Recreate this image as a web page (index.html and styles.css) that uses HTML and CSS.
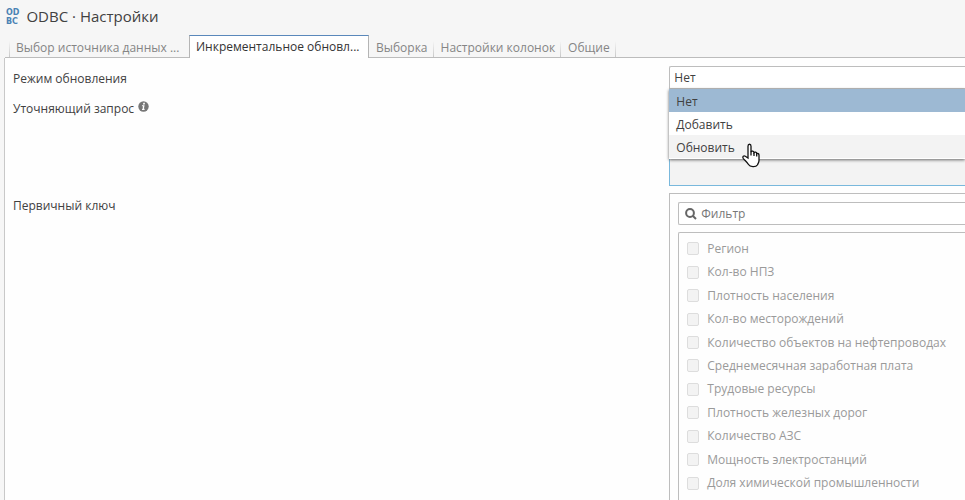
FILE: index.html
```html
<!DOCTYPE html>
<html lang="ru">
<head>
<meta charset="utf-8">
<title>ODBC · Настройки</title>
<link rel="stylesheet" href="styles.css">
</head>
<body>
<header class="header">
  <span class="logo" aria-hidden="true"><span>OD</span><span>BC</span></span>
  <h1 class="title">ODBC · Настройки</h1>
</header>
<nav class="tabs" role="tablist">
  <button class="tab tab-long tab-first" role="tab" type="button">Выбор источника данных ...</button>
  <button class="tab tab-long tab-active" role="tab" type="button" aria-selected="true">Инкрементальное обновл...</button>
  <button class="tab" role="tab" type="button">Выборка</button>
  <button class="tab" role="tab" type="button">Настройки колонок</button>
  <button class="tab" role="tab" type="button">Общие</button>
</nav>
<main class="panel">
  <label class="label" for="mode">Режим обновления</label>
  <div class="mode">
    <select class="select" id="mode"><option>Нет</option><option>Добавить</option><option>Обновить</option></select>
    <div class="menu" role="listbox">
      <button class="option option-selected" role="option" type="button" aria-selected="true">Нет</button>
      <button class="option" role="option" type="button">Добавить</button>
      <button class="option option-hover" role="option" type="button">Обновить</button>
      <svg class="cursor" width="20" height="26" viewBox="0 0 20 26" aria-hidden="true">
        <path d="M7 15V3.2C7 .6 10 .6 10 3.2V9C10.600 7.600 13 7.900 13 9.600C13.800 8.600 15.700 9 15.700 10.600C16.800 10 18 10.800 18 12.200V17.500C18 19.500 17 20.500 16.300 22C15 24.300 9 24.300 7.500 21.500C6 19 3.800 17.300 2.200 15.300C1 13.500 2.900 12.300 4.300 13.200Z"/>
        <path class="cursor-line" d="M10 8.500V12.500M13 9.500V13M15.700 10.500V13.500"/>
      </svg>
    </div>
  </div>

  <div class="label">
    <label for="query">Уточняющий запрос</label>
    <svg class="info" width="11" height="11" viewBox="0 0 11 11" aria-hidden="true">
      <circle cx="5.500" cy="5.500" r="5.200"/>
      <path d="M5.300 1.800H7L6.700 3.400H5ZM4 4.300H6.600L5.900 7.800H6.700L6.500 8.900H3.900L4.100 7.900H4.500L5 5.200H3.900Z"/>
    </svg>
  </div>
  <textarea class="query" id="query" disabled></textarea>

  <div class="label">Первичный ключ</div>
  <section class="keys">
    <div class="filter">
      <svg class="search" width="12" height="12" viewBox="0 0 12 12" aria-hidden="true"><circle cx="5" cy="5" r="3.900"/><path d="M8 8L11 11"/></svg>
      <input class="filter-input" type="text" placeholder="Фильтр" aria-label="Фильтр">
    </div>
    <div class="list">
      <label class="item"><input class="check" type="checkbox" disabled>Регион</label>
      <label class="item"><input class="check" type="checkbox" disabled>Кол-во НПЗ</label>
      <label class="item"><input class="check" type="checkbox" disabled>Плотность населения</label>
      <label class="item"><input class="check" type="checkbox" disabled>Кол-во месторождений</label>
      <label class="item"><input class="check" type="checkbox" disabled>Количество объектов на нефтепроводах</label>
      <label class="item"><input class="check" type="checkbox" disabled>Среднемесячная заработная плата</label>
      <label class="item"><input class="check" type="checkbox" disabled>Трудовые ресурсы</label>
      <label class="item"><input class="check" type="checkbox" disabled>Плотность железных дорог</label>
      <label class="item"><input class="check" type="checkbox" disabled>Количество АЗС</label>
      <label class="item"><input class="check" type="checkbox" disabled>Мощность электростанций</label>
      <label class="item"><input class="check" type="checkbox" disabled>Доля химической промышленности</label>
    </div>
  </section>
</main>
</body>
</html>
```
FILE: styles.css
```css
* { box-sizing: border-box; }

body {
  margin: 0;
  min-height: 100vh;
  display: flex;
  flex-direction: column;
  background: #f6f6f6;
  color: #414141;
  font: 12px/22px "Open Sans", sans-serif;
}

button, input, select, textarea { font: inherit; color: inherit; margin: 0; }

.header {
  display: flex;
  align-items: center;
  gap: 7px;
  height: 35px;
  padding: 0 6px 3px;
}

.logo {
  display: flex;
  flex-direction: column;
  gap: 1px;
  padding-top: 2px;
  font-family: "DejaVu Sans", sans-serif;
  font-size: 8px;
  font-weight: 700;
  line-height: 8px;
  color: #4b83b4;
}

.title { margin: 0; font-size: 15px; font-weight: 400; }

.tabs {
  display: flex;
  height: 23px;
  margin-left: 5px;
  padding-left: 4px;
  border-bottom: 1px solid #bcbcbc;
}

.tab {
  height: 22px;
  padding: 2px 6px 0;
  border: 0;
  background: linear-gradient(to top, #c8c8c8, #f6f6f6) right bottom / 1px 16px no-repeat;
  color: #858585;
  text-align: left;
  white-space: nowrap;
  border-left: 1px solid transparent;
}

.tab-long { width: 180px; background: none; }

.tab-first { background: linear-gradient(to top, #c8c8c8, #f6f6f6) left bottom / 1px 16px no-repeat; background-origin: border-box; }

.tab-active {
  height: 23px;
  padding-top: 0;
  border: 1px solid #b5b5b5;
  border-top-color: #5a88bb;
  border-bottom: 0;
  background: #fff;
  color: #333;
}

.panel {
  flex: 1;
  display: grid;
  grid-template-columns: 657fr 296fr;
  grid-template-rows: 23px 90px 1fr;
  row-gap: 7px;
  margin-left: 4px;
  padding: 8px 0 0 8px;
  border-left: 1px solid #c8c8c8;
  background: #fefefe;
}

.label { display: flex; align-items: flex-start; gap: 4px; padding-top: 2px; }

.info { margin-top: 3px; fill: #777; }
.info path { fill: #fff; }

.mode { position: relative; }

.select {
  display: block;
  appearance: none;
  width: 100%;
  height: 23px;
  padding: 0 4px;
  border: 1px solid #bdbdbd;
  border-right: 0;
  border-radius: 2px 0 0 0;
  background: #fff;
}

.menu {
  position: absolute;
  z-index: 1;
  top: 100%;
  left: 0;
  right: 0;
  padding-bottom: 1px;
  background: #fff;
  box-shadow: 0 1px 3px #666;
}

.option {
  display: block;
  width: 100%;
  height: 23px;
  padding: 2px 7px 0;
  border: 0;
  background: #fff;
  text-align: left;
}

.option-selected { background: #9db9d3; }
.option-hover { background: #f3f3f3; }

.cursor { position: absolute; left: 72px; top: 54px; fill: #fff; stroke: #111; stroke-width: 1.3; }
.cursor-line { fill: none; }

.query {
  display: block;
  width: 100%;
  height: 100%;
  resize: none;
  border: 1px solid #79b8dc;
  border-right: 0;
  background: #f3f3f3;
}

.keys {
  display: flex;
  flex-direction: column;
  gap: 7px;
  padding: 8px 0 0 8px;
  border: 1px solid #bdbdbd;
  border-right: 0;
  border-bottom: 0;
}

.filter {
  display: flex;
  align-items: center;
  gap: 4px;
  height: 23px;
  padding-left: 6px;
  border: 1px solid #bdbdbd;
  border-right: 0;
  border-radius: 2px 0 0 2px;
  background: #fff;
}

.search { flex: none; fill: none; stroke: #666; stroke-width: 2; }

.filter-input { flex: 1; min-width: 0; height: 21px; padding: 0; border: 0; background: none; }
.filter-input::placeholder { color: #777; opacity: 1; }

.list {
  flex: 1;
  display: grid;
  grid-auto-rows: minmax(23px, 1fr);
  padding: 4px 0 5px 8px;
  border: 1px solid #bdbdbd;
  border-right: 0;
  border-bottom: 0;
  border-radius: 2px 0 0 0;
}

.item { display: flex; align-items: center; gap: 8px; color: #9a9a9a; white-space: nowrap; }

.check {
  appearance: none;
  width: 12px;
  height: 13px;
  border: 1px solid #ddd;
  border-radius: 2px;
  background: #f3f3f3;
}
```
